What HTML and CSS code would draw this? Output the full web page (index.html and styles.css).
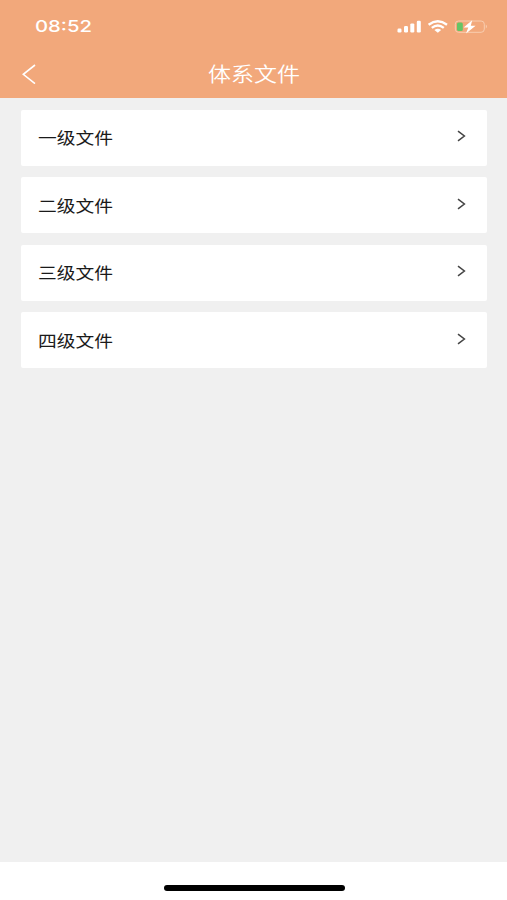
FILE: index.html
```html
<!DOCTYPE html>
<html lang="zh-CN">
<head>
<meta charset="utf-8">
<title>体系文件</title>
<link rel="stylesheet" href="styles.css">
</head>
<body>
<div class="screen">
  <header class="header">
    <div class="status">
      <span class="time">08:52</span>
      <svg class="status-icons" width="92" height="14" viewBox="0 0 92 14" fill="#fff">
        <rect x="0.5" y="8.5" width="4" height="4" rx="1.2"/>
        <rect x="7" y="6" width="4" height="6.5" rx="1.2"/>
        <rect x="13.3" y="3.4" width="4" height="9.1" rx="1.2"/>
        <rect x="19.8" y="0.8" width="4" height="11.7" rx="1.2"/>
        <g fill="none" stroke="#fff" stroke-width="2.4">
          <path d="M31.6 4.7Q40.8-2 50 4.7"/>
          <path d="M34.8 7.9Q40.8 3.3 46.8 7.9"/>
        </g>
        <path d="M37.4 9.9Q40.8 7.4 44.2 9.9L40.8 12.7Z"/>
        <rect x="58.3" y="1" width="29" height="11.3" rx="3.2" fill="none" stroke="#f8cdb1" stroke-width="1"/>
        <path d="M88.8 4.6q2.3 1.9 0 4z" fill="#f8cdb1"/>
        <rect x="60" y="2.4" width="5.8" height="8.6" rx="1.5" fill="#65c466"/>
        <path d="M75.2 0.3L66.6 7.5h4.7L69 13.4l9.6-7.6h-4.8z"/>
      </svg>
    </div>
    <div class="navbar">
      <svg class="back" width="14" height="20" viewBox="0 0 14 20" fill="none" stroke="#fff" stroke-width="1.6"><path d="M13 1L1.3 10.3 13 19.6"/></svg>
      <h1 class="title"><span>体系文件</span></h1>
    </div>
  </header>
  <main class="list">
    <div class="row"><span class="label">一级文件</span><svg class="arrow" width="9" height="12" viewBox="0 0 9 12"><path d="M1 1.2l6.4 4.8L1 10.8"/></svg></div>
    <div class="row"><span class="label">二级文件</span><svg class="arrow" width="9" height="12" viewBox="0 0 9 12"><path d="M1 1.2l6.4 4.8L1 10.8"/></svg></div>
    <div class="row"><span class="label">三级文件</span><svg class="arrow" width="9" height="12" viewBox="0 0 9 12"><path d="M1 1.2l6.4 4.8L1 10.8"/></svg></div>
    <div class="row"><span class="label">四级文件</span><svg class="arrow" width="9" height="12" viewBox="0 0 9 12"><path d="M1 1.2l6.4 4.8L1 10.8"/></svg></div>
  </main>
  <footer class="footer"><div class="home-bar"></div></footer>
</div>
</body>
</html>
```

FILE: styles.css
```css
* { box-sizing: border-box; }
body {
  margin: 0;
  background: #f0f0f0;
  font-family: "Liberation Sans", "Noto Sans CJK SC", sans-serif;
}
.screen {
  display: flex;
  flex-direction: column;
  height: 900px;
  overflow: hidden;
}
.header {
  height: 98px;
  flex: none;
  background: #f2a87b;
  color: #fff;
}
.status {
  display: flex;
  justify-content: space-between;
  height: 50px;
  padding: 16px 18px 0 35px;
}
.time {
  font: 500 16.5px/21px Inter, sans-serif;
  transform: scaleX(1.23);
  transform-origin: left;
}
.status-icons { margin-top: 4px; }
.navbar {
  display: grid;
  grid-template-columns: 60px 1fr 60px;
  align-items: center;
  height: 48px;
}
.back { margin-left: 22px; }
.title {
  margin: 0;
  font: 350 20px/30px "Noto Sans CJK SC", sans-serif;
  text-align: center;
}
.title span {
  display: inline-block;
  transform: scaleX(1.15);
}
.list {
  flex: 1;
  display: flex;
  flex-direction: column;
  gap: 11.5px;
  padding: 11.6px 20px 0 21px;
}
.row {
  display: flex;
  align-items: center;
  justify-content: space-between;
  height: 56px;
  padding: 0 21px 0 17px;
  background: #fff;
  border-radius: 2px;
}
.label {
  margin-top: -1px;
  font: 400 16.4px/24px "Noto Sans CJK SC", sans-serif;
  color: #1a1a1a;
  transform: scaleX(1.145);
  transform-origin: left;
}
.arrow {
  margin-top: -3px;
  fill: none;
  stroke: #444;
  stroke-width: 1.5;
}
.footer {
  flex: none;
  height: 38px;
  padding-top: 23px;
  background: #fff;
}
.home-bar {
  width: 181px;
  height: 6px;
  margin-left: 164px;
  border-radius: 3px;
  background: #000;
}
```
